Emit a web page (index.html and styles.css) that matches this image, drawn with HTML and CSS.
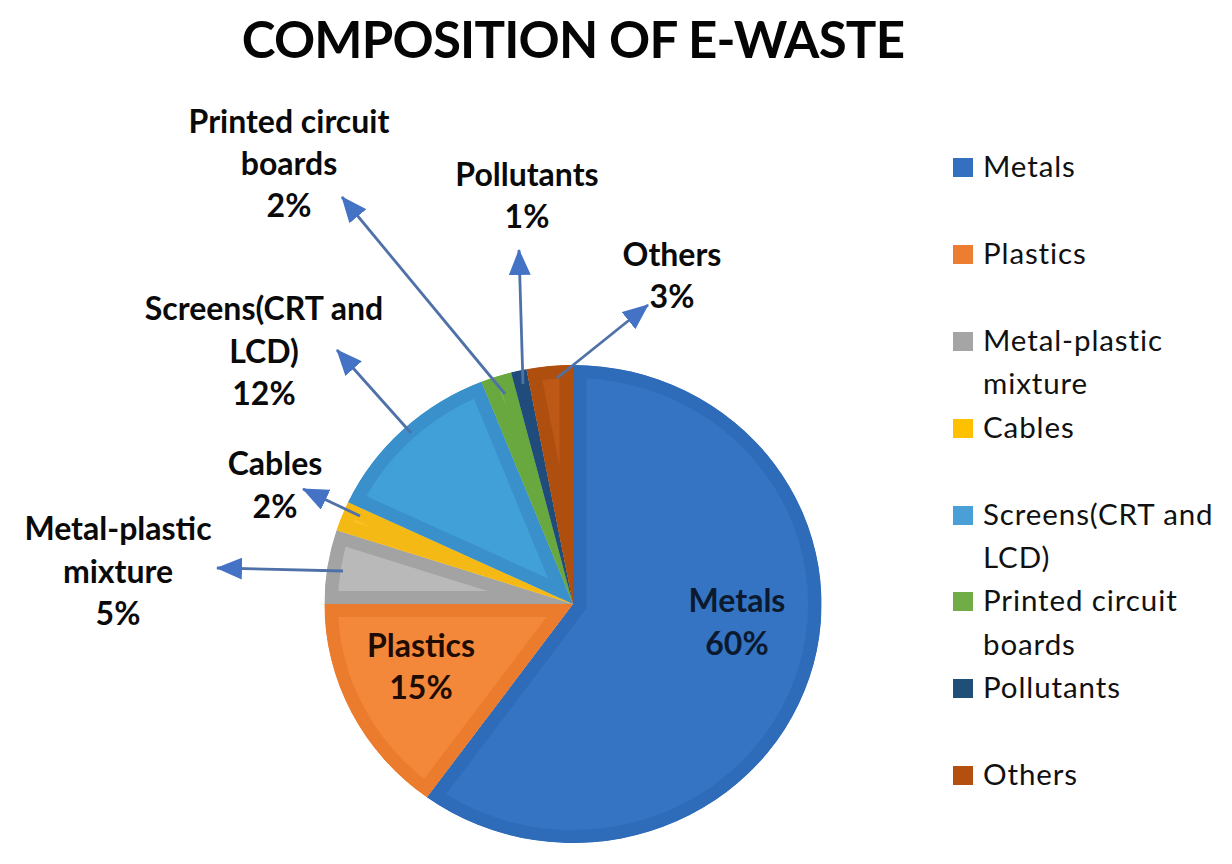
FILE: index.html
```html
<!DOCTYPE html>
<html lang="en">
<head>
<meta charset="utf-8">
<title>Composition of E-Waste</title>
<link rel="stylesheet" href="styles.css">
</head>
<body>
<div class="page">
  <h1 class="title">COMPOSITION OF E-WASTE</h1>
  <div class="content">
    <svg class="chart" width="940" height="774" viewBox="0 90 940 774" xmlns="http://www.w3.org/2000/svg">
      <defs>
        <marker id="ah" viewBox="0 0 26 22" refX="25" refY="11" markerWidth="26" markerHeight="22" orient="auto" markerUnits="userSpaceOnUse">
          <path d="M0,0 L26,11 L0,22 Z" fill="#4472c4"/>
        </marker>
        <clipPath id="c-metals"><path d="M0,0 L0,-239 A239,239 0 1 1 -140.48,193.36 Z"/></clipPath>
        <clipPath id="c-plastics"><path d="M0,0 L-140.48,193.36 A239,239 0 0 1 -239,0 Z"/></clipPath>
        <clipPath id="c-mix"><path d="M0,0 L-239,0 A239,239 0 0 1 -227.31,-73.85 Z"/></clipPath>
        <clipPath id="c-cables"><path d="M0,0 L-227.31,-73.85 A239,239 0 0 1 -216.25,-101.77 Z"/></clipPath>
        <clipPath id="c-screens"><path d="M0,0 L-216.25,-101.77 A239,239 0 0 1 -87.98,-222.22 Z"/></clipPath>
        <clipPath id="c-pcb"><path d="M0,0 L-87.98,-222.22 A239,239 0 0 1 -59.44,-231.5 Z"/></clipPath>
        <clipPath id="c-poll"><path d="M0,0 L-59.44,-231.5 A239,239 0 0 1 -44.79,-234.77 Z"/></clipPath>
        <clipPath id="c-others"><path d="M0,0 L-44.79,-234.77 A239,239 0 0 1 0,-239 Z"/></clipPath>
      </defs>

      <g transform="translate(573,604) scale(1.04,1)">
        <path class="slice s-metals" clip-path="url(#c-metals)" d="M0,0 L0,-239 A239,239 0 1 1 -140.48,193.36 Z"/>
        <path class="slice s-plastics" clip-path="url(#c-plastics)" d="M0,0 L-140.48,193.36 A239,239 0 0 1 -239,0 Z"/>
        <path class="slice s-mix" clip-path="url(#c-mix)" d="M0,0 L-239,0 A239,239 0 0 1 -227.31,-73.85 Z"/>
        <path class="slice s-cables" clip-path="url(#c-cables)" d="M0,0 L-227.31,-73.85 A239,239 0 0 1 -216.25,-101.77 Z"/>
        <path class="slice s-screens" clip-path="url(#c-screens)" d="M0,0 L-216.25,-101.77 A239,239 0 0 1 -87.98,-222.22 Z"/>
        <path class="slice s-pcb" clip-path="url(#c-pcb)" d="M0,0 L-87.98,-222.22 A239,239 0 0 1 -59.44,-231.5 Z"/>
        <path class="slice s-poll" clip-path="url(#c-poll)" d="M0,0 L-59.44,-231.5 A239,239 0 0 1 -44.79,-234.77 Z"/>
        <path class="slice s-others" clip-path="url(#c-others)" d="M0,0 L-44.79,-234.77 A239,239 0 0 1 0,-239 Z"/>
      </g>

      <g class="arrows">
        <line x1="505" y1="394" x2="342" y2="197" marker-end="url(#ah)"/>
        <line x1="523" y1="384" x2="519" y2="250" marker-end="url(#ah)"/>
        <line x1="557" y1="378" x2="648" y2="305" marker-end="url(#ah)"/>
        <line x1="411" y1="433" x2="337" y2="350" marker-end="url(#ah)"/>
        <line x1="360" y1="516" x2="303" y2="489" marker-end="url(#ah)"/>
        <line x1="343" y1="571" x2="217" y2="568" marker-end="url(#ah)"/>
      </g>

      <g class="labels">
        <text x="289" y="133"><tspan x="289">Printed circuit</tspan><tspan x="289" dy="42">boards</tspan><tspan x="289" dy="42">2%</tspan></text>
        <text x="527" y="186"><tspan x="527">Pollutants</tspan><tspan x="527" dy="42">1%</tspan></text>
        <text x="672" y="266"><tspan x="672">Others</tspan><tspan x="672" dy="42">3%</tspan></text>
        <text x="264" y="320"><tspan x="264">Screens(CRT and</tspan><tspan x="264" dy="42.5">LCD)</tspan><tspan x="264" dy="42.5">12%</tspan></text>
        <text x="275" y="475"><tspan x="275">Cables</tspan><tspan x="275" dy="43">2%</tspan></text>
        <text x="118" y="540"><tspan x="118">Metal-plastic</tspan><tspan x="118" dy="42.5">mixture</tspan><tspan x="118" dy="42.5">5%</tspan></text>
        <text class="in-plastics" x="421" y="657"><tspan x="421">Plastics</tspan><tspan x="421" dy="42">15%</tspan></text>
        <text class="in-metals" x="737" y="612"><tspan x="737">Metals</tspan><tspan x="737" dy="43">60%</tspan></text>
      </g>
    </svg>

    <ul class="legend">
      <li class="legend-item"><span class="swatch sw-metals"></span><span class="legend-text">Metals</span></li>
      <li class="legend-item"><span class="swatch sw-plastics"></span><span class="legend-text">Plastics</span></li>
      <li class="legend-item"><span class="swatch sw-mix"></span><span class="legend-text">Metal-plastic<br>mixture</span></li>
      <li class="legend-item"><span class="swatch sw-cables"></span><span class="legend-text">Cables</span></li>
      <li class="legend-item"><span class="swatch sw-screens"></span><span class="legend-text">Screens(CRT and<br>LCD)</span></li>
      <li class="legend-item"><span class="swatch sw-pcb"></span><span class="legend-text">Printed circuit<br>boards</span></li>
      <li class="legend-item"><span class="swatch sw-poll"></span><span class="legend-text">Pollutants</span></li>
      <li class="legend-item"><span class="swatch sw-others"></span><span class="legend-text">Others</span></li>
    </ul>
  </div>
</div>
</body>
</html>
```

FILE: styles.css
```css
html, body {
  margin: 0;
  padding: 0;
  background: #ffffff;
}

body {
  font-family: Lato, "Open Sans", "Liberation Sans", sans-serif;
  color: #111111;
  width: 1232px;
  height: 864px;
  overflow: hidden;
}

.page {
  width: 1232px;
  height: 864px;
  display: flex;
  flex-direction: column;
}

.title {
  margin: 0;
  box-sizing: border-box;
  width: 1146px;
  height: 90px;
  padding-top: 8px;
  font-size: 51px;
  line-height: 62px;
  font-weight: 700;
  text-align: center;
  color: #050505;
  letter-spacing: -0.8px;
}

.content {
  display: flex;
  flex-direction: row;
  align-items: flex-start;
}

.chart {
  display: block;
  flex: 0 0 auto;
}

.slice {
  stroke-width: 26;
}
.s-metals   { fill: #3474c3; stroke: #2e6cba; }
.s-plastics { fill: #f4883a; stroke: #eb7c2e; }
.s-mix      { fill: #b9b9b9; stroke: #a3a3a3; }
.s-cables   { fill: #fdc22a; stroke: #f5b916; }
.s-screens  { fill: #42a0d8; stroke: #3a90ca; }
.s-pcb      { fill: #74b84a; stroke: #68a83e; }
.s-poll     { fill: #235585; stroke: #1f4c7a; }
.s-others   { fill: #bd5816; stroke: #ae4f0f; }

.arrows line {
  stroke: #4f71a8;
  stroke-width: 2.8;
}

.labels text {
  font-family: Lato, "Open Sans", "Liberation Sans", sans-serif;
  font-weight: 700;
  font-size: 32px;
  fill: #0a0a0a;
  text-anchor: middle;
}
.labels .in-plastics { fill: #1e0c02; }
.labels .in-metals { fill: #0c1a30; }

.legend {
  list-style: none;
  margin: 54px 0 0 0;
  padding: 0 0 0 13px;
  display: flex;
  flex-direction: column;
}

.legend-item {
  display: flex;
  flex-direction: row;
  align-items: flex-start;
  height: 86.9px;
}

.swatch {
  flex: 0 0 auto;
  width: 20px;
  height: 19px;
  margin-top: 14px;
  margin-right: 10px;
}
.sw-metals   { background: #3371c0; }
.sw-plastics { background: #ed7d31; }
.sw-mix      { background: #a5a5a5; }
.sw-cables   { background: #ffc000; }
.sw-screens  { background: #4a9fd6; }
.sw-pcb      { background: #70ad47; }
.sw-poll     { background: #1f4e79; }
.sw-others   { background: #b4500f; }

.legend-text {
  font-size: 29.5px;
  line-height: 43.45px;
  font-weight: 400;
  color: #111111;
  letter-spacing: 0.9px;
  white-space: nowrap;
}
```
